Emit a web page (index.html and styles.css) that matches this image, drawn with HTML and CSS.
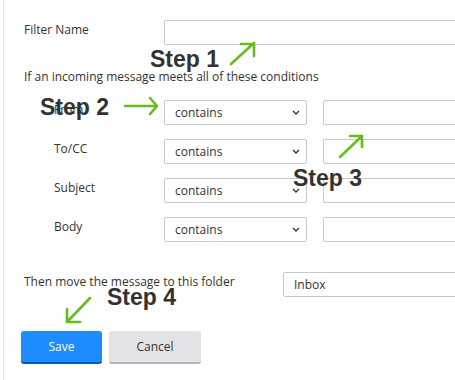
FILE: index.html
```html
<!DOCTYPE html>
<html lang="en">

<head>
    <meta charset="UTF-8">
    <title>Filter</title>
    <link rel="stylesheet" href="styles.css">
</head>

<body>
    <div class="panel">
        <div class="row name-row">
            <label class="label">Filter Name</label>
            <div class="field wide"></div>
        </div>
        <p class="intro">If an incoming message meets all of these conditions</p>
        <div class="conditions">
            <div class="cond">
                <label class="label sub">From</label>
                <div class="select"><span>contains</span><svg width="8" height="5" viewBox="0 0 8 5"><path d="M1 1l3 3 3-3" fill="none" stroke="#333" stroke-width="1.3"/></svg></div>
                <div class="field"></div>
            </div>
            <div class="cond">
                <label class="label sub">To/CC</label>
                <div class="select"><span>contains</span><svg width="8" height="5" viewBox="0 0 8 5"><path d="M1 1l3 3 3-3" fill="none" stroke="#333" stroke-width="1.3"/></svg></div>
                <div class="field"></div>
            </div>
            <div class="cond">
                <label class="label sub">Subject</label>
                <div class="select"><span>contains</span><svg width="8" height="5" viewBox="0 0 8 5"><path d="M1 1l3 3 3-3" fill="none" stroke="#333" stroke-width="1.3"/></svg></div>
                <div class="field"></div>
            </div>
            <div class="cond">
                <label class="label sub">Body</label>
                <div class="select"><span>contains</span><svg width="8" height="5" viewBox="0 0 8 5"><path d="M1 1l3 3 3-3" fill="none" stroke="#333" stroke-width="1.3"/></svg></div>
                <div class="field"></div>
            </div>
        </div>
        <div class="row folder-row">
            <label class="label">Then move the message to this folder</label>
            <div class="select folder"><span>Inbox</span></div>
        </div>
        <div class="buttons">
            <a class="btn save" href="javascript:;">Save</a>
            <a class="btn cancel" href="javascript:;">Cancel</a>
        </div>
    </div>

    <!-- 标注 -->
    <div class="step s1">Step 1</div>
    <div class="step s2">Step 2</div>
    <div class="step s3">Step 3</div>
    <div class="step s4">Step 4</div>
    <svg class="arrows" width="455" height="380" viewBox="0 0 455 380">
        <g fill="none" stroke="#63bd1f" stroke-width="2.6" stroke-linecap="round" stroke-linejoin="round">
            <path d="M231 64L254 43M241 44H254V56"/>
            <path d="M125 106H157M150 98L157 106L150 114"/>
            <path d="M340 157L362 136M350 136H362V147"/>
            <path d="M90 298L67 322M67 309V322H80"/>
        </g>
    </svg>
</body>

</html>
```

FILE: styles.css
```css
* {
    margin: 0;
    padding: 0;
    box-sizing: border-box;
}

html,
body {
    width: 455px;
    height: 380px;
    overflow: hidden;
    background: #fff;
}

body {
    position: relative;
    font-family: "Open Sans", "Noto Sans", sans-serif;
    font-size: 12px;
    color: #333;
}

a {
    text-decoration: none;
}

.panel {
    height: 380px;
    margin-left: 3px;
    padding: 20px 0 0 20px;
    border-left: 1px solid #e4e4e4;
}

.row {
    display: flex;
    align-items: flex-start;
}

.label {
    display: block;
    width: 140px;
    flex-shrink: 0;
    line-height: 20px;
}

.field {
    height: 25px;
    border: 1px solid #c8c8c8;
    border-radius: 2px;
    background: #fff;
    width: 200px;
    flex-shrink: 0;
}

.field.wide {
    width: 300px;
}

.intro {
    margin-top: 22px;
    line-height: 20px;
}

.conditions {
    margin-top: 13px;
    display: grid;
    row-gap: 14px;
}

.cond {
    display: flex;
    align-items: flex-start;
}

.label.sub {
    padding-left: 30px;
}

.select {
    display: flex;
    align-items: center;
    justify-content: space-between;
    width: 143px;
    height: 25px;
    padding: 0 6px 0 10px;
    border: 1px solid #c8c8c8;
    border-radius: 2px;
    background: #fff;
    flex-shrink: 0;
    margin-right: 16px;
}

.select span {
    line-height: 20px;
}

.folder-row {
    margin-top: 30px;
}

.folder-row .label {
    width: 259px;
}

.select.folder {
    width: 200px;
}

.buttons {
    display: flex;
    gap: 7px;
    margin: 34px 0 0 -3px;
}

.btn {
    display: block;
    height: 33px;
    line-height: 32px;
    text-align: center;
    border-radius: 3px;
    font-size: 12px;
}

.save {
    width: 81px;
    background: #1e8bff;
    color: #fff;
    border-bottom: 2px solid #0a54b4;
}

.cancel {
    width: 92px;
    background: #e2e2e7;
    color: #333;
    border-bottom: 2px solid #b4b4bc;
}

.step {
    position: absolute;
    font-family: "Liberation Sans", Arial, sans-serif;
    font-weight: bold;
    font-size: 23px;
    line-height: 24px;
    color: #333;
}

.s1 {
    left: 150px;
    top: 47px;
}

.s2 {
    left: 40px;
    top: 95px;
}

.s3 {
    left: 293px;
    top: 166px;
}

.s4 {
    left: 107px;
    top: 285px;
}

.arrows {
    position: absolute;
    left: 0;
    top: 0;
}
```
